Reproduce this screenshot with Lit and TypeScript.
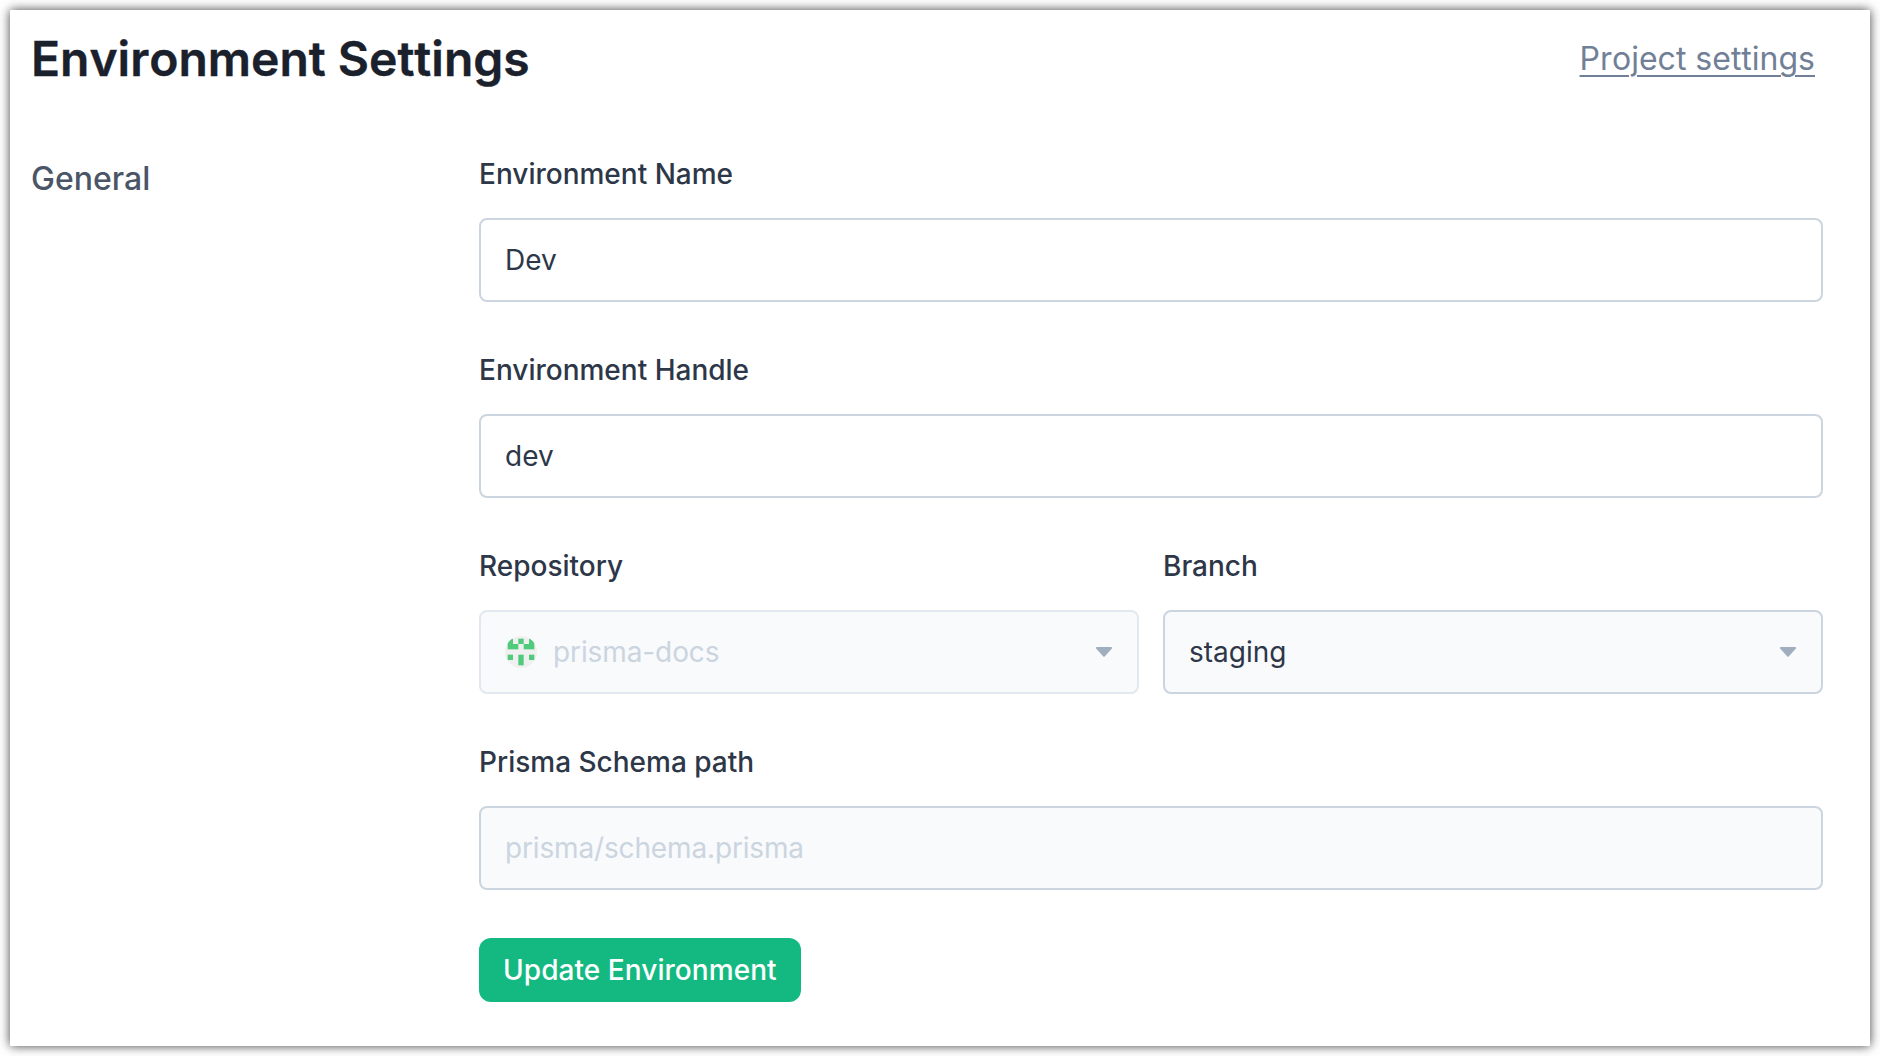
import { LitElement, html, css, svg } from "lit";
import { customElement, property } from "lit/decorators.js";

const AVATAR_CELLS: Array<[number, number]> = [
  [0, 0], [2, 0], [4, 0],
  [0, 1], [1, 1], [3, 1], [4, 1],
  [0, 3], [2, 3], [4, 3],
  [2, 4],
];

@customElement("text-field")
class TextField extends LitElement {
  @property() label = "";
  @property() value = "";
  @property() placeholder = "";
  @property({ type: Boolean }) muted = false;

  static styles = css`
    :host {
      display: block;
    }
    .label {
      display: block;
      font-size: 28px;
      font-weight: 500;
      line-height: 42px;
      color: #2d3748;
      margin-bottom: 23px;
    }
    .input {
      display: block;
      box-sizing: border-box;
      width: 100%;
      height: 84px;
      padding: 0 24px;
      border: 2px solid #cbd5e0;
      border-radius: 8px;
      background: #fff;
      font: inherit;
      font-size: 28px;
      color: #2d3748;
      outline: none;
    }
    .input.muted {
      background: #f9fafc;
    }
    .input::placeholder {
      color: #cbd5e0;
      opacity: 1;
      letter-spacing: -0.15px;
    }
  `;

  render() {
    return html`
      <label class="label" for="field">${this.label}</label>
      <input
        id="field"
        class="input ${this.muted ? "muted" : ""}"
        .value=${this.value}
        placeholder=${this.placeholder}
      />
    `;
  }
}

@customElement("select-field")
class SelectField extends LitElement {
  @property() label = "";
  @property() value = "";
  @property({ type: Boolean }) avatar = false;
  @property({ type: Boolean }) disabled = false;

  static styles = css`
    :host {
      display: block;
    }
    .label {
      font-size: 28px;
      font-weight: 500;
      line-height: 42px;
      color: #2d3748;
      margin-bottom: 23px;
    }
    .box {
      display: flex;
      align-items: center;
      box-sizing: border-box;
      height: 84px;
      padding: 0 25px 0 24px;
      border: 2px solid #cbd5e0;
      border-radius: 8px;
      background: #f9fafc;
      font-size: 28px;
      color: #2d3748;
    }
    .box.disabled {
      border-color: #e2e8f0;
      color: #cbd5e0;
      letter-spacing: -0.1px;
    }
    .avatar {
      width: 32px;
      height: 32px;
      border-radius: 50%;
      margin-right: 16px;
      flex: none;
    }
    .value {
      flex: 1;
    }
    .caret {
      width: 16px;
      height: 10px;
      flex: none;
      display: block;
    }
  `;

  render() {
    return html`
      <div class="label">${this.label}</div>
      <div class="box ${this.disabled ? "disabled" : ""}">
        ${this.avatar
          ? html`<svg class="avatar" viewBox="0 0 12 12">
              <rect width="12" height="12" fill="#f0f0f0" />
              ${AVATAR_CELLS.map(
                ([x, y]) =>
                  svg`<rect x=${1 + x * 2} y=${1 + y * 2} width="2" height="2" fill="#50ca7b" />`
              )}
            </svg>`
          : null}
        <span class="value">${this.value}</span>
        <svg class="caret" viewBox="0 0 16 10">
          <path
            d="M1 0h14c.9 0 1.3 1 .7 1.7L8.7 9.5a1 1 0 0 1-1.4 0L.3 1.7C-.3 1 .1 0 1 0z"
            fill="#a0aec0"
          />
        </svg>
      </div>
    `;
  }
}

@customElement("app-root")
class AppRoot extends LitElement {
  static styles = css`
    :host {
      display: block;
      box-sizing: border-box;
      height: 1056px;
      padding: 10px;
      background: #fff;
      overflow: hidden;
      font-family: Inter, "Liberation Sans", sans-serif;
    }
    .panel {
      box-sizing: border-box;
      height: 1036px;
      padding: 17px 47px 0 21px;
      background: #fff;
      box-shadow: 0 0 10px rgba(0, 0, 0, 0.75);
    }
    .header {
      display: flex;
      justify-content: space-between;
      align-items: center;
      padding-right: 8px;
      height: 64px;
    }
    .title {
      margin: 0;
      font-size: 48px;
      font-weight: 600;
      line-height: 64px;
      font-kerning: none;
      -webkit-text-stroke: 0.4px #1a202c;
      color: #1a202c;
    }
    .link {
      font-size: 32px;
      line-height: 48px;
      font-kerning: none;
      color: #718096;
      text-decoration: underline;
      text-decoration-thickness: 2px;
      text-underline-offset: 5px;
    }
    .body {
      display: grid;
      grid-template-columns: 448px 1fr;
      padding-top: 62px;
    }
    .section {
      margin: 0;
      padding-top: 2px;
      font-size: 32px;
      font-weight: 500;
      line-height: 48px;
      color: #4a5568;
    }
    .form {
      display: flex;
      flex-direction: column;
      gap: 47px;
    }
    .pair {
      display: grid;
      grid-template-columns: 1fr 1fr;
      gap: 24px;
    }
    .button {
      align-self: flex-start;
      margin-top: 1px;
      height: 64px;
      padding: 0 24px;
      border: 0;
      border-radius: 12px;
      background: #13b981;
      color: #fff;
      font: inherit;
      font-size: 28px;
      font-weight: 500;
      letter-spacing: 0.06px;
    }
  `;

  render() {
    return html`
      <main class="panel">
        <header class="header">
          <h1 class="title">Environment Settings</h1>
          <a class="link">Project settings</a>
        </header>
        <div class="body">
          <h2 class="section">General</h2>
          <div class="form">
            <text-field label="Environment Name" value="Dev"></text-field>
            <text-field label="Environment Handle" value="dev"></text-field>
            <div class="pair">
              <select-field label="Repository" value="prisma-docs" avatar disabled></select-field>
              <select-field label="Branch" value="staging"></select-field>
            </div>
            <text-field
              label="Prisma Schema path"
              placeholder="prisma/schema.prisma"
              muted
            ></text-field>
            <button class="button">Update Environment</button>
          </div>
        </div>
      </main>
    `;
  }
}
